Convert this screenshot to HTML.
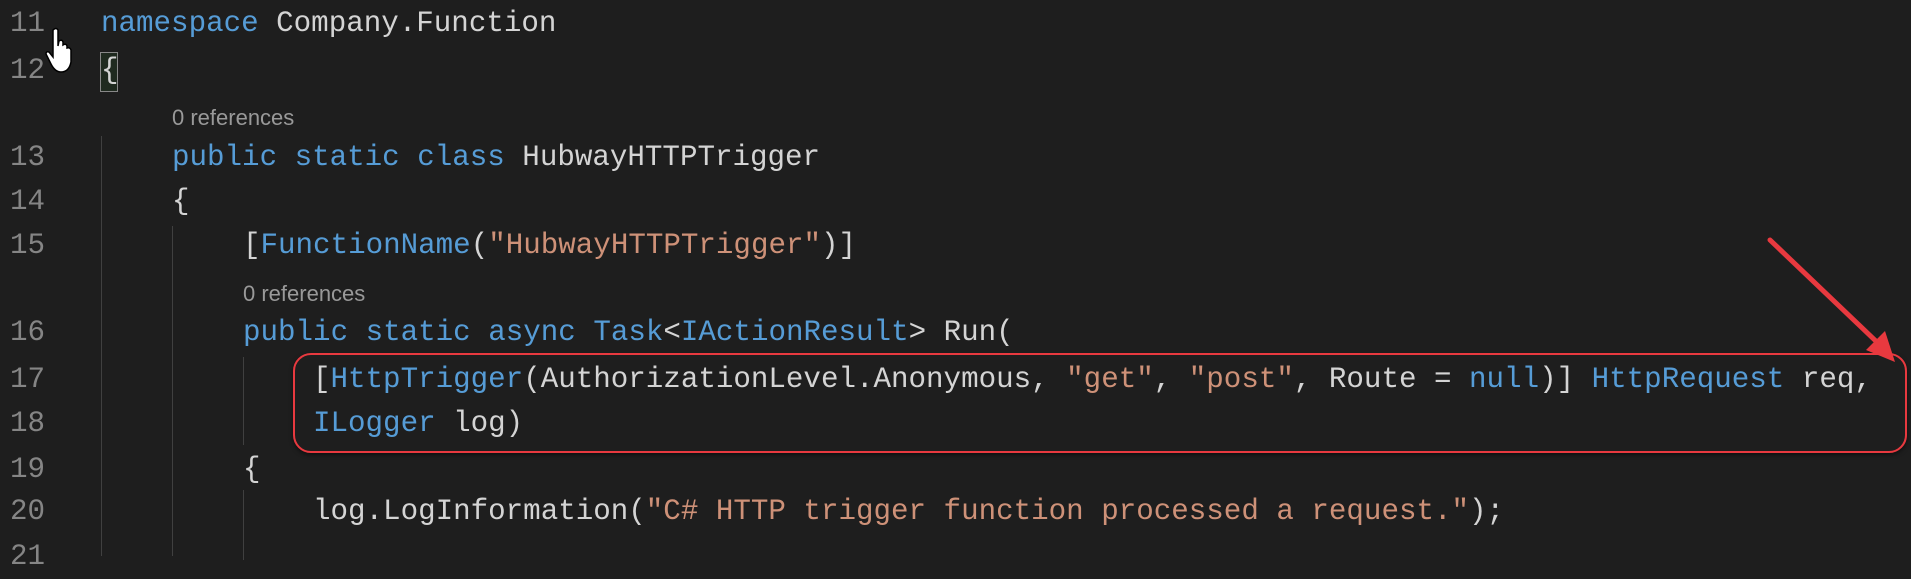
<!DOCTYPE html>
<html><head><meta charset="utf-8"><style>
body{margin:0;width:1911px;height:553px;background:#1e1e1e;overflow:hidden;position:relative;font-family:"Liberation Mono",monospace;}
.ln{position:absolute;left:0;width:45px;text-align:right;color:#858585;font-size:29.2px;line-height:44px;}
.c{position:absolute;font-size:29.2px;line-height:44px;color:#d4d4d4;white-space:pre;}
.lens{position:absolute;font-family:"Liberation Sans",sans-serif;font-size:22px;color:#999;line-height:30px;}
.k{color:#569cd6}.s{color:#ce9178}
.g{position:absolute;width:1px;background:#404040;}
</style></head><body>
<div class="g" style="left:101px;top:136px;height:420px"></div>
<div class="g" style="left:172px;top:226px;height:330px"></div>
<div class="g" style="left:243px;top:357px;height:88px"></div>
<div class="g" style="left:243px;top:490px;height:70px"></div>

<div class="ln" style="top:2px">11</div><div class="c" style="left:101px;top:2px"><span class="k">namespace</span> Company.Function</div>
<div class="ln" style="top:49px">12</div>
<div style="position:absolute;left:100px;top:52px;width:16px;height:38px;border:1px solid #888;background:#1f2a1f"></div>
<div class="c" style="left:101px;top:49px">{</div>
<div class="lens" style="left:172px;top:103px">0 references</div>
<div class="ln" style="top:136px">13</div><div class="c" style="left:172px;top:136px"><span class="k">public static class</span> HubwayHTTPTrigger</div>
<div class="ln" style="top:180px">14</div><div class="c" style="left:172px;top:180px">{</div>
<div class="ln" style="top:224px">15</div><div class="c" style="left:243px;top:224px">[<span class="k">FunctionName</span>(<span class="s">"HubwayHTTPTrigger"</span>)]</div>
<div class="lens" style="left:243px;top:279px">0 references</div>
<div class="ln" style="top:311px">16</div><div class="c" style="left:243px;top:311px"><span class="k">public static async</span> <span class="k">Task</span>&lt;<span class="k">IActionResult</span>&gt; Run(</div>
<div class="ln" style="top:358px">17</div><div class="c" style="left:313px;top:358px">[<span class="k">HttpTrigger</span>(AuthorizationLevel.Anonymous, <span class="s">"get"</span>, <span class="s">"post"</span>, Route = <span class="k">null</span>)] <span class="k">HttpRequest</span> req,</div>
<div class="ln" style="top:402px">18</div><div class="c" style="left:313px;top:402px"><span class="k">ILogger</span> log)</div>
<div class="ln" style="top:448px">19</div><div class="c" style="left:243px;top:448px">{</div>
<div class="ln" style="top:490px">20</div><div class="c" style="left:313px;top:490px">log.LogInformation(<span class="s">"C# HTTP trigger function processed a request."</span>);</div>
<div class="ln" style="top:535px">21</div>

<div style="position:absolute;left:293px;top:353px;width:1610px;height:96px;border:2.5px solid #e8393f;border-radius:18px;box-shadow:0 2px 4px rgba(0,0,0,.5)"></div>
<svg style="position:absolute;left:0;top:0" width="1911" height="553">
<line x1="1770" y1="240" x2="1880" y2="345" stroke="#e8393f" stroke-width="5" stroke-linecap="round"/>
<polygon points="1895,362 1866,350 1885,331" fill="#e8393f"/>
</svg>
<svg style="position:absolute;left:44px;top:26px" width="32" height="50" viewBox="0 0 30 50">
<path d="M8 4 Q11 1 13 4 L13 20 L14 15 Q17 13 18 16 L18 19 Q21 17 22 20 L22 22 Q25 21 26 24 L26 36 Q24 46 16 46 Q10 46 6 38 L1 28 Q1 25 4 26 L8 31 Z" fill="#fff" stroke="#000" stroke-width="1.5"/>
</svg>
</body></html>
